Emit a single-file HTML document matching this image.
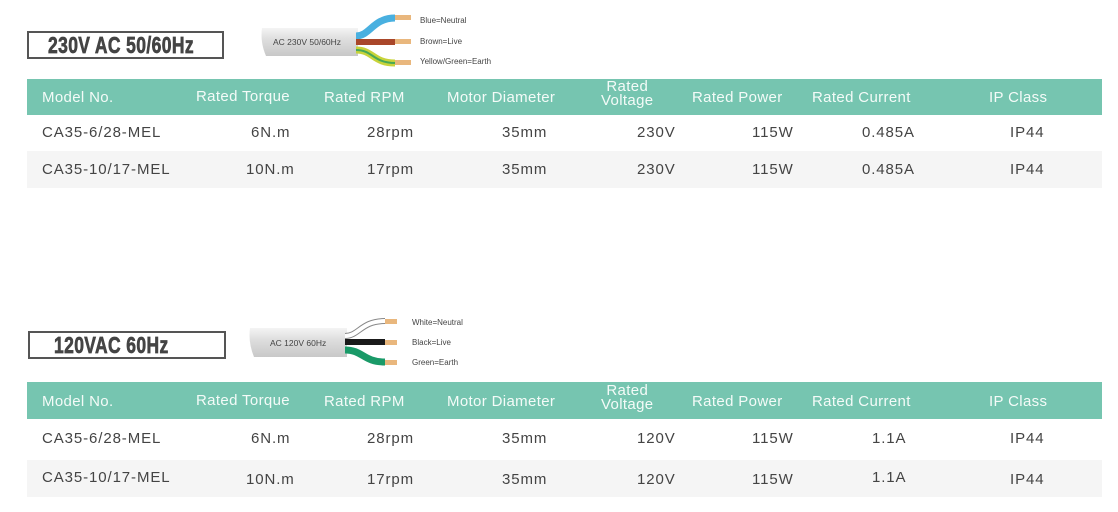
<!DOCTYPE html>
<html><head><meta charset="utf-8"><style>
body{margin:0;width:1118px;height:512px;background:#fff;position:relative;overflow:hidden;font-family:"Liberation Sans",sans-serif;}
.a{position:absolute;white-space:nowrap}
.box{position:absolute;border:2px solid #555;box-sizing:border-box;background:#fff;}
.bt{position:absolute;font-weight:bold;color:#444;font-size:23px;white-space:nowrap;transform:scaleX(0.76);transform-origin:left top;letter-spacing:0.5px;-webkit-text-stroke:0.7px #444}
.hd{position:absolute;background:#76c5b0}
.g{position:absolute;background:#f5f5f5}
.h{position:absolute;color:#f4fbf8;font-size:15px;white-space:nowrap;letter-spacing:0.35px}
.c{position:absolute;color:#444;font-size:15px;white-space:nowrap;letter-spacing:0.9px}
.lb{position:absolute;font-size:8px;color:#444;white-space:nowrap}
</style></head><body>

<div class="box" style="left:27px;top:31px;width:197px;height:28px;"></div>
<div class="bt" style="left:48px;top:32px">230V AC 50/60Hz</div>
<svg class="a" style="left:255px;top:10px" width="170" height="62">
<defs><linearGradient id="cb" x1="0" y1="0" x2="0" y2="1"><stop offset="0" stop-color="#f4f4f4"/><stop offset="0.4" stop-color="#dedede"/><stop offset="1" stop-color="#c8c8c8"/></linearGradient></defs>
<path d="M7 18 L103 18 L103 46 L11 46 Q5 32 7 18Z" fill="url(#cb)"/>
<path d="M101 26 C115 26 118 8 140 8" stroke="#49b0e0" stroke-width="7" fill="none"/>
<path d="M101 32 L140 32" stroke="#a9472a" stroke-width="6" fill="none"/>
<path d="M101 40 C118 40 118 53 140 53" stroke="#c8d33a" stroke-width="7" fill="none"/>
<path d="M101 40 C118 40 118 53 140 53" stroke="#48a856" stroke-width="2" fill="none"/>
<rect x="140" y="5" width="16" height="5" fill="#e9b77d"/><rect x="140" y="29" width="16" height="5" fill="#e9b77d"/><rect x="140" y="50" width="16" height="5" fill="#e9b77d"/>
</svg>
<div class="lb" style="left:273px;top:37px;font-size:8.5px">AC 230V 50/60Hz</div>
<div class="lb" style="left:420px;top:16px">Blue=Neutral</div>
<div class="lb" style="left:420px;top:37px">Brown=Live</div>
<div class="lb" style="left:420px;top:57px">Yellow/Green=Earth</div>

<div class="hd" style="left:27px;top:79px;width:1075px;height:36px"></div>
<div class="g" style="left:27px;top:151px;width:1075px;height:37px"></div>
<div class="h" style="left:42px;top:89px">Model No.</div>
<div class="h" style="left:196px;top:88px">Rated Torque</div>
<div class="h" style="left:324px;top:89px">Rated RPM</div>
<div class="h" style="left:447px;top:89px">Motor Diameter</div>
<div class="h" style="left:601px;top:80px;line-height:14px;text-align:center">Rated<br>Voltage</div>
<div class="h" style="left:692px;top:89px">Rated Power</div>
<div class="h" style="left:812px;top:89px">Rated Current</div>
<div class="h" style="left:989px;top:89px">IP Class</div>
<div class="c" style="left:42px;top:124px">CA35-6/28-MEL</div>
<div class="c" style="left:251px;top:124px">6N.m</div>
<div class="c" style="left:367px;top:124px">28rpm</div>
<div class="c" style="left:502px;top:124px">35mm</div>
<div class="c" style="left:637px;top:124px">230V</div>
<div class="c" style="left:752px;top:124px">115W</div>
<div class="c" style="left:862px;top:124px">0.485A</div>
<div class="c" style="left:1010px;top:124px">IP44</div>
<div class="c" style="left:42px;top:161px">CA35-10/17-MEL</div>
<div class="c" style="left:246px;top:161px">10N.m</div>
<div class="c" style="left:367px;top:161px">17rpm</div>
<div class="c" style="left:502px;top:161px">35mm</div>
<div class="c" style="left:637px;top:161px">230V</div>
<div class="c" style="left:752px;top:161px">115W</div>
<div class="c" style="left:862px;top:161px">0.485A</div>
<div class="c" style="left:1010px;top:161px">IP44</div>

<div class="box" style="left:28px;top:331px;width:198px;height:28px;"></div>
<div class="bt" style="left:54px;top:332px">120VAC 60Hz</div>
<svg class="a" style="left:245px;top:310px" width="170" height="62">
<defs><linearGradient id="cb2" x1="0" y1="0" x2="0" y2="1"><stop offset="0" stop-color="#f4f4f4"/><stop offset="0.4" stop-color="#dedede"/><stop offset="1" stop-color="#c8c8c8"/></linearGradient></defs>
<path d="M5 18 L102 18 L102 47 L9 47 Q3 32 5 18Z" fill="url(#cb2)"/>
<path d="M100 26 C114 26 116 11 140 11" stroke="#888" stroke-width="6" fill="none"/>
<path d="M100 26 C114 26 116 11 140 11" stroke="#fff" stroke-width="4" fill="none"/>
<path d="M100 32 L140 32" stroke="#1a1a1a" stroke-width="6" fill="none"/>
<path d="M100 40 C118 40 118 52 140 52" stroke="#1a9a68" stroke-width="7" fill="none"/>
<rect x="140" y="9" width="12" height="5" fill="#e9b77d"/><rect x="140" y="30" width="12" height="5" fill="#e9b77d"/><rect x="140" y="50" width="12" height="5" fill="#e9b77d"/>
</svg>
<div class="lb" style="left:270px;top:338px;font-size:8.5px">AC 120V 60Hz</div>
<div class="lb" style="left:412px;top:318px">White=Neutral</div>
<div class="lb" style="left:412px;top:338px">Black=Live</div>
<div class="lb" style="left:412px;top:358px">Green=Earth</div>

<div class="hd" style="left:27px;top:382px;width:1075px;height:37px"></div>
<div class="g" style="left:27px;top:460px;width:1075px;height:37px"></div>
<div class="h" style="left:42px;top:393px">Model No.</div>
<div class="h" style="left:196px;top:392px">Rated Torque</div>
<div class="h" style="left:324px;top:393px">Rated RPM</div>
<div class="h" style="left:447px;top:393px">Motor Diameter</div>
<div class="h" style="left:601px;top:384px;line-height:14px;text-align:center">Rated<br>Voltage</div>
<div class="h" style="left:692px;top:393px">Rated Power</div>
<div class="h" style="left:812px;top:393px">Rated Current</div>
<div class="h" style="left:989px;top:393px">IP Class</div>
<div class="c" style="left:42px;top:430px">CA35-6/28-MEL</div>
<div class="c" style="left:251px;top:430px">6N.m</div>
<div class="c" style="left:367px;top:430px">28rpm</div>
<div class="c" style="left:502px;top:430px">35mm</div>
<div class="c" style="left:637px;top:430px">120V</div>
<div class="c" style="left:752px;top:430px">115W</div>
<div class="c" style="left:872px;top:430px">1.1A</div>
<div class="c" style="left:1010px;top:430px">IP44</div>
<div class="c" style="left:42px;top:469px">CA35-10/17-MEL</div>
<div class="c" style="left:246px;top:471px">10N.m</div>
<div class="c" style="left:367px;top:471px">17rpm</div>
<div class="c" style="left:502px;top:471px">35mm</div>
<div class="c" style="left:637px;top:471px">120V</div>
<div class="c" style="left:752px;top:471px">115W</div>
<div class="c" style="left:872px;top:469px">1.1A</div>
<div class="c" style="left:1010px;top:471px">IP44</div>
</body></html>
